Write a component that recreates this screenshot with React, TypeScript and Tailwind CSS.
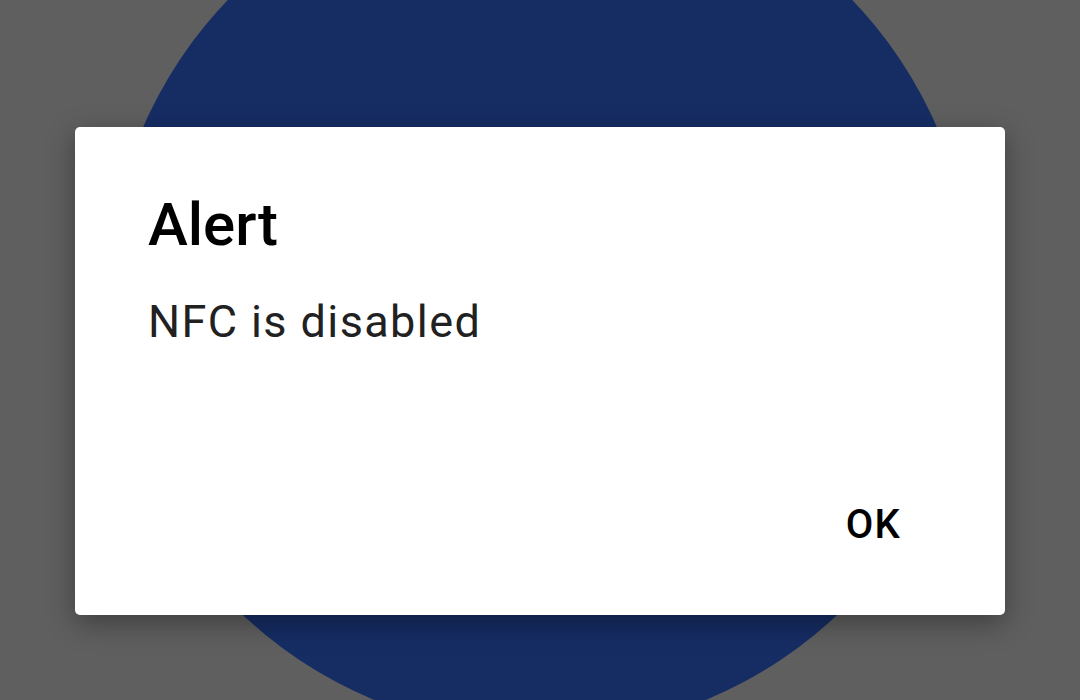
export default function App() {
  return (
    <div className="relative w-[1080px] h-[700px] overflow-hidden bg-[#5f5f5f] font-['Roboto',sans-serif]">
      {/* backdrop circle behind the dimmed screen */}
      <div className="absolute left-[107px] top-[-133px] w-[866px] h-[866px] rounded-full bg-[#162d64]" />

      <div className="relative flex justify-center pt-[127px]">
        <div className="w-[930px] h-[488px] bg-white rounded-[5px] shadow-[0_8px_28px_rgba(0,0,0,0.35)] flex flex-col pl-[73px] pr-[90px] pt-[62px] pb-[66px]">
          <h2 className="text-[60px] leading-[72px] font-medium text-black">Alert</h2>
          <p className="mt-[34px] text-[45px] leading-[54px] tracking-[0.031em] text-[#212121]">NFC is disabled</p>
          <div className="mt-auto flex justify-end">
            <button className="text-[40px] leading-[48px] font-medium tracking-[0.03em] text-black pl-[15px] pr-[14px]">OK</button>
          </div>
        </div>
      </div>
    </div>
  );
}
